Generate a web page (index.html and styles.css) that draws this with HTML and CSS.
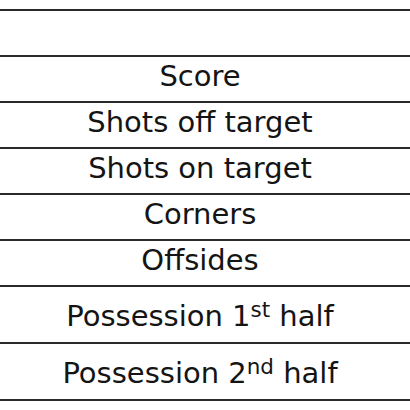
FILE: index.html
```html
<!DOCTYPE html>
<html>
<head>
<meta charset="utf-8">
<link rel="stylesheet" href="styles.css">
</head>
<body>
<div class="table">
  <div class="row"></div>
  <div class="row">Score</div>
  <div class="row">Shots off target</div>
  <div class="row">Shots on target</div>
  <div class="row">Corners</div>
  <div class="row">Offsides</div>
  <div class="row tall">Possession 1<sup>st</sup> half</div>
  <div class="row tall last">Possession 2<sup>nd</sup> half</div>
</div>
</body>
</html>
```
FILE: styles.css
```css
html, body {
  margin: 0;
  padding: 0;
  background: #ffffff;
}
.table {
  padding-top: 9px;
  font-family: "DejaVu Sans", sans-serif;
  font-size: 29px;
  color: #141414;
}
.row {
  box-sizing: content-box;
  height: 44px;
  line-height: 38px;
  border-top: 2px solid #2a2a2a;
  text-align: center;
  padding-right: 10px;
  white-space: nowrap;
}
.row.tall {
  height: 45px;
  padding-top: 10px;
}
.row.last {
  border-bottom: 2px solid #2a2a2a;
}
sup {
  font-size: 0.74em;
  line-height: 0;
  vertical-align: 0.42em;
}
```
